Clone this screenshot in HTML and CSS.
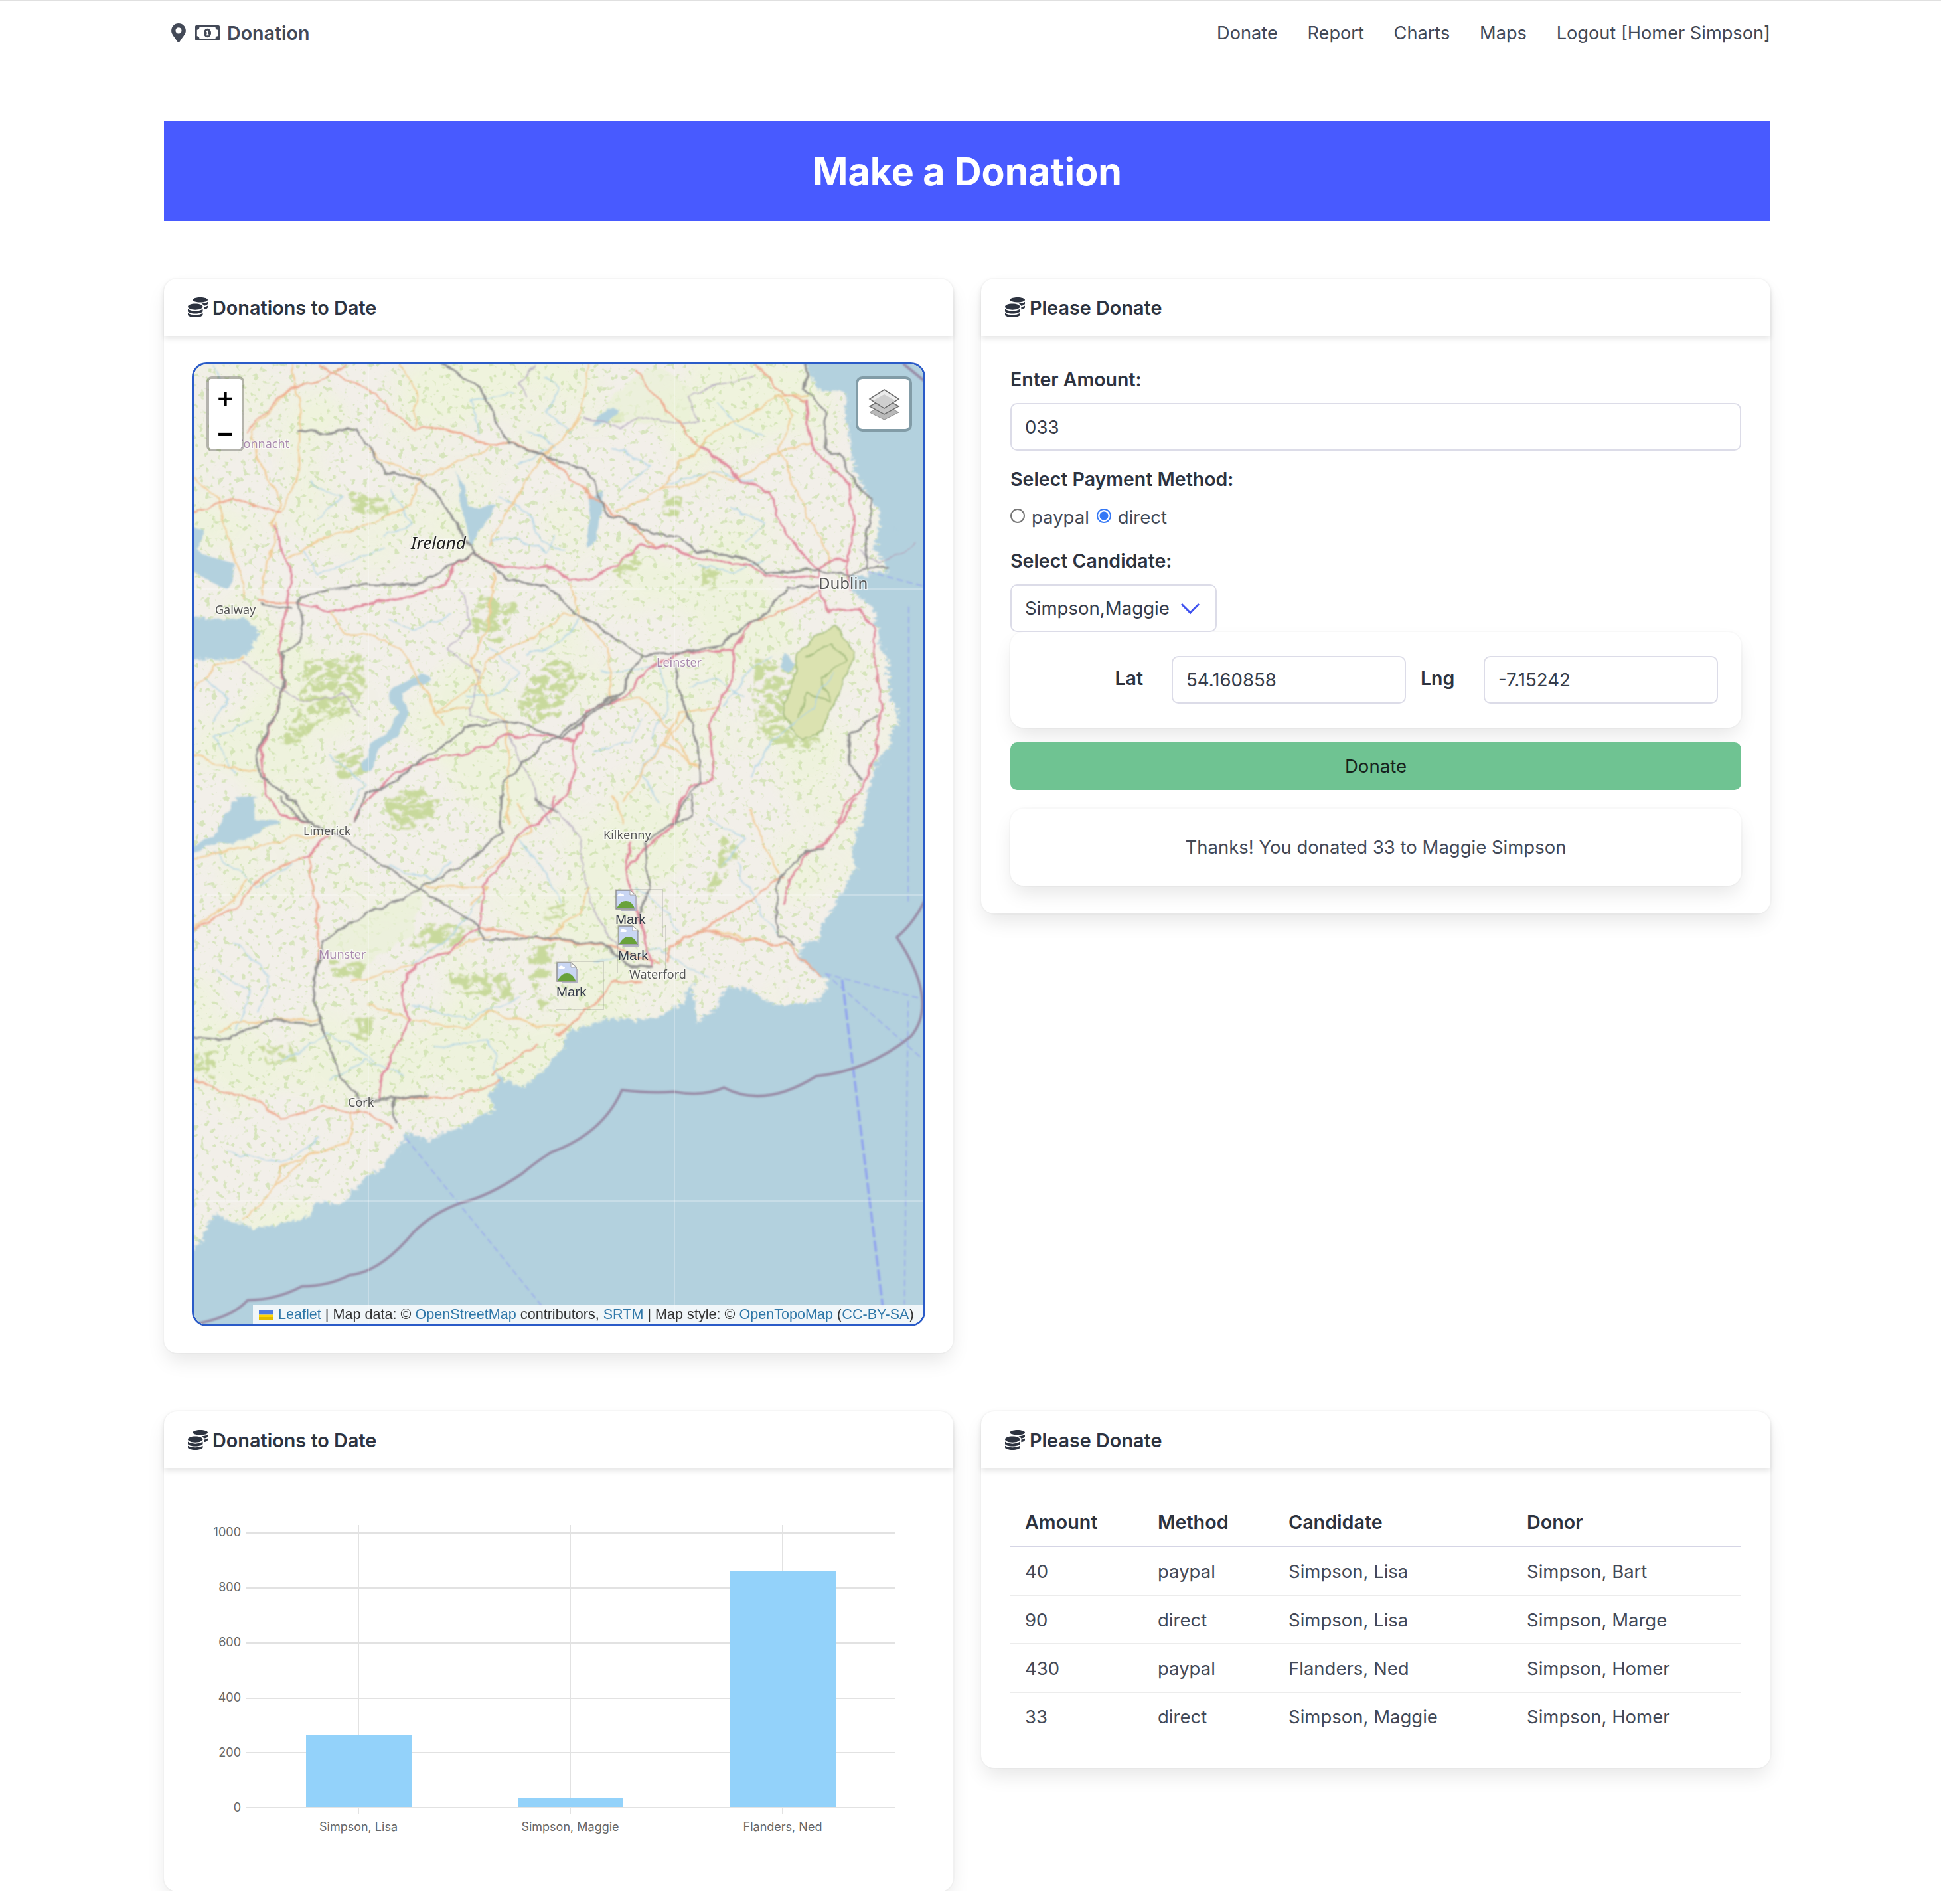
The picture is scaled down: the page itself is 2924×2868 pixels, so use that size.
FILE: index.html
```html
<!DOCTYPE html>
<html lang="en">
<head>
<meta charset="UTF-8">
<meta name="viewport" content="width=device-width, initial-scale=1.0">
<title>Donation</title>
<link rel="stylesheet" href="styles.css">
</head>
<body>

<svg class="sprites" width="0" height="0">
  <symbol id="coins" viewBox="0 0 512 512"><path d="M0 405.3V448c0 35.3 86 64 192 64s192-28.7 192-64v-42.7C342.7 434.4 267.2 448 192 448S41.3 434.4 0 405.3zM320 128c106 0 192-28.7 192-64S426 0 320 0 128 28.7 128 64s86 64 192 64zM0 300.4V352c0 35.3 86 64 192 64s192-28.7 192-64v-51.6c-41.3 34-116.9 51.6-192 51.6S41.3 334.4 0 300.4zm416 11c57.3-11.1 96-31.7 96-55.4v-42.7c-23.2 16.4-57.3 27.6-96 34.5v63.6zM192 160C86 160 0 195.8 0 240s86 80 192 80 192-35.8 192-80-86-80-192-80zm219.3 56.3c60-10.8 100.7-32 100.7-56.3v-42.7c-35.5 25.1-96.5 38.6-160.7 41.8 29.5 14.3 51.2 33.5 60 57.2z"/></symbol>
  <symbol id="broken" viewBox="0 0 32 32">
    <path d="M1 1H22L30 8V29H1Z" fill="#c9d6f3" stroke="#8a8a8a" stroke-width="1.4"/>
    <path d="M22 1V8H30Z" fill="#fff" stroke="#a5a5a5" stroke-width="1"/>
    <path d="M4 8c1-3 5-3 6-1 3-1 4 2 2 3H5c-2 0-2-2-1-2z" fill="#fff"/>
    <path d="M2 28C6 20 11 17 16 17s10 3 13 11z" fill="#69a23a"/>
    <path d="M31 10V31H8" fill="none" stroke="#b4b4c4" stroke-width="2"/>
  </symbol>
</svg>

<div class="container">

  <nav class="navbar">
    <div class="brand">
      <svg class="icon-pin" viewBox="0 0 384 512"><path d="M172.268 501.67C26.97 291.031 0 268.413 0 192 0 85.961 85.961 0 192 0s192 85.961 192 192c0 76.413-26.97 99.031-172.268 309.67-9.535 13.774-29.93 13.773-39.464 0zM192 272c44.183 0 80-35.817 80-80s-35.817-80-80-80-80 35.817-80 80 35.817 80 80 80z"/></svg>
      <svg class="icon-bill" viewBox="0 64 640 384" preserveAspectRatio="none"><path d="M320 144c-53.02 0-96 50.14-96 112 0 61.85 42.98 112 96 112 53 0 96-50.13 96-112 0-61.86-42.98-112-96-112zm40 168c0 4.42-3.58 8-8 8h-64c-4.42 0-8-3.58-8-8v-16c0-4.42 3.58-8 8-8h16v-55.44l-.47.31a7.992 7.992 0 0 1-11.09-2.22l-8.88-13.31a7.992 7.992 0 0 1 2.22-11.09l15.33-10.22a23.99 23.99 0 0 1 13.31-4.03H328c4.42 0 8 3.58 8 8v88h16c4.42 0 8 3.58 8 8v16zM608 64H32C14.33 64 0 78.33 0 96v320c0 17.67 14.33 32 32 32h576c17.67 0 32-14.33 32-32V96c0-17.67-14.33-32-32-32zm-16 272c-35.35 0-64 28.65-64 64H112c0-35.35-28.65-64-64-64V176c35.35 0 64-28.65 64-64h416c0 35.35 28.65 64 64 64v160z"/></svg>
      <span>Donation</span>
    </div>
    <div class="nav-links">
      <a>Donate</a>
      <a>Report</a>
      <a>Charts</a>
      <a>Maps</a>
      <a>Logout [Homer Simpson]</a>
    </div>
  </nav>

  <section class="hero">
    <h1>Make a Donation</h1>
  </section>

  <div class="columns first-row">
    <div class="card">
      <header class="card-header">
        <svg class="icon-coins"><use href="#coins"/></svg>
        <span>Donations to Date</span>
      </header>
      <div class="card-body map-body">
        <div class="map">
          <svg class="map-art" width="1099" height="1446" viewBox="292 549 1099 1446">
            <defs>
              <filter id="speckle" x="0" y="0" width="100%" height="100%" color-interpolation-filters="sRGB">
                <feTurbulence type="fractalNoise" baseFrequency="0.11" numOctaves="2" seed="7"/>
                <feColorMatrix values="0 0 0 0 .78  0 0 0 0 .87  0 0 0 0 .64  9 0 0 0 -5.4"/>
              </filter>
              <filter id="wash" x="0" y="0" width="100%" height="100%" color-interpolation-filters="sRGB">
                <feTurbulence type="fractalNoise" baseFrequency="0.006" numOctaves="2" seed="3"/>
                <feColorMatrix values="0 0 0 0 .93  0 0 0 0 .96  0 0 0 0 .84  5 0 0 0 -2.2"/>
              </filter>
              <filter id="patchy" x="0" y="0" width="100%" height="100%" color-interpolation-filters="sRGB">
                <feTurbulence type="fractalNoise" baseFrequency="0.05" numOctaves="3" seed="11" result="noise"/>
                <feColorMatrix in="noise" values="0 0 0 0 0  0 0 0 0 0  0 0 0 0 0  8 0 0 0 -3.4" result="holes"/>
                <feComposite in="SourceGraphic" in2="holes" operator="in"/>
                <feGaussianBlur stdDeviation="1"/>
              </filter>
              <filter id="organic" x="0" y="0" width="100%" height="100%" color-interpolation-filters="sRGB">
                <feTurbulence type="fractalNoise" baseFrequency="0.035" numOctaves="3" seed="5" result="noise"/>
                <feDisplacementMap in="SourceGraphic" in2="noise" scale="14" xChannelSelector="R" yChannelSelector="G"/>
                <feGaussianBlur stdDeviation="0.8"/>
              </filter>
              <filter id="coast" x="0" y="0" width="100%" height="100%" color-interpolation-filters="sRGB">
                <feTurbulence type="fractalNoise" baseFrequency="0.1" numOctaves="3" seed="9" result="noise"/>
                <feDisplacementMap in="SourceGraphic" in2="noise" scale="26" xChannelSelector="R" yChannelSelector="G"/>
              </filter>
              <filter id="soft"><feGaussianBlur stdDeviation="0.8"/></filter>
              <filter id="softer"><feGaussianBlur stdDeviation="0.35"/></filter>
            </defs>

            <rect class="land" x="292" y="549" width="1099" height="1446"/>
            <rect x="292" y="549" width="1099" height="1446" filter="url(#wash)" opacity="0.6"/>
            <rect x="292" y="549" width="1099" height="1446" filter="url(#speckle)" opacity="0.62"/>

            <g filter="url(#organic)">
              <!-- upper part of the map, drawn in the 1120x700 crop units -->
              <g transform="translate(280 540) scale(.714 .446)">
                <g filter="url(#patchy)">
                  <path class="wood" d="M720 1090L780 1010 850 1060 800 1150 790 1210 730 1230 700 1180Z"/>
                  <path class="wood" d="M250 1020L370 1000 380 1100 350 1200 280 1230 250 1290 200 1300 240 1180Z"/>
                  <path class="wood" d="M310 1340L370 1310 385 1400 320 1425Z"/>
                  <path class="wood" d="M420 1480L500 1450 525 1530 440 1568Z"/>
                  <path class="wood" d="M935 640L960 690 930 760 900 720Z"/>
                  <path class="wood" d="M1010 460L1045 470 1040 550 1005 530Z"/>
                  <path class="wood" d="M880 180L920 160 930 210 880 220Z"/>
                  <path class="wood" d="M1200 1000L1300 1040 1340 1320 1260 1320 1200 1260Z"/>
                  <path class="wood" d="M1090 700L1130 720 1120 780 1085 770Z"/>
                  <path class="wood" d="M620 800L700 830 660 960 600 920Z"/>
                  <path class="wood" d="M340 450L420 470 430 530 350 520Z"/>
                </g>
                <path class="wood-light" d="M940 70L1000 30 1070 110 1060 220 950 220 870 190Z"/>
                <path class="wood-dark" d="M1290 1000L1340 930 1370 900 1410 1000 1385 1100 1345 1250 1300 1290 1260 1190 1280 1100Z"/>
                <path class="wood-line" d="M1310 1010L1360 960 1390 1020 1340 1080 1360 1160 1310 1130 1290 1210"/>

                <g filter="url(#coast)">
                  <path class="sea" d="M1310 20L1315 60 1340 100 1390 120 1395 200 1400 300 1420 420 1450 480 1468 510 1450 640 1480 720 1400 740 1400 780 1450 840 1455 900 1480 1020 1485 1130 1502 1220 1482 1300 1460 1360 1435 1480 1425 1568 1600 1568 1600 -20 1310 -20Z"/>
                  <path class="sea" d="M-20 880L130 875 152 930 130 1000 70 1020 40 1020 -20 1000Z"/>
                </g>
                <path class="sea" d="M0 560L40 580 20 640 60 680 100 680 90 780 60 760 0 700Z"/>
                <path class="sea" d="M570 380L600 500 655 500 625 560 600 640 590 560Z"/>
                <path class="sea" d="M855 470L880 440 870 620 845 640Z"/>
                <path class="sea" d="M885 170L915 170 890 220 860 225Z"/>
                <path class="sea" d="M1490 570L1505 580 1495 590Z"/>
                <path class="sea" d="M1265 1000L1285 1030 1270 1060 1250 1050Z"/>
                <path class="lake-line" d="M500 1080L440 1130 460 1200 440 1260 400 1310 380 1380"/>
                <path class="sea" d="M100 1500L140 1480 150 1560 90 1568Z"/>

                <g class="river">
                  <path d="M60 30L90 120 60 210 110 260"/>
                  <path d="M690 120L600 140 620 250"/>
                  <path d="M760 60L790 110 760 180 810 250"/>
                  <path d="M1040 350L1010 420 1130 380 1200 420"/>
                  <path d="M640 620L700 610 760 660 780 600"/>
                  <path d="M660 470L720 520 750 630 800 640"/>
                  <path d="M250 650L280 730 340 690 420 640"/>
                  <path d="M1080 700L1160 720 1220 680"/>
                  <path d="M880 1060L1000 1040 1020 1180 980 1280"/>
                  <path d="M640 980L700 1060 660 1130 590 1140"/>
                  <path d="M1130 1180L1200 1040 1240 1000"/>
                  <path d="M1000 1300L960 1400 1000 1500"/>
                  <path d="M140 1220L60 1280 100 1400"/>
                  <path d="M1370 1060L1320 1180 1240 1290 1190 1410"/>
                  <path d="M830 880L790 960 720 1000"/>
                  <path d="M40 1080L90 1150 60 1220"/>
                  <path d="M260 420L330 470 280 540"/>
                  <path d="M430 440L480 560 420 600"/>
                  <path d="M720 240L780 300 700 360"/>
                  <path d="M900 300L980 360 920 440"/>
                  <path d="M1120 150L1160 230 1220 260"/>
                  <path d="M1150 500L1220 560 1180 620"/>
                  <path d="M560 860L480 920 430 880"/>
                  <path d="M300 1340L380 1440 340 1520"/>
                  <path d="M860 1330L940 1290 960 1220"/>
                  <path d="M1180 1140L1120 1080 1060 1110"/>
                </g>
                <g class="border">
                  <path d="M1060 130L1100 95 1180 70 1200 60"/>
                  <path d="M1060 130L1080 210 1040 220 960 200 920 230 840 200"/>
                  <path d="M740 30L700 90 720 130"/>
                  <path d="M1420 650L1460 690 1540 630"/>
                  <path d="M580 780L600 900 550 980 620 1060 600 1200 670 1230 740 1470 770 1568"/>
                  <path d="M120 1020L190 1110 250 1160 330 1130 370 1210"/>
                </g>
                <g class="road-sec">
                  <path d="M220 100L180 170 140 250 150 340 200 480 190 540 180 570"/>
                  <path d="M225 20L225 90 240 140 240 400 200 520"/>
                  <path d="M380 310L420 350 500 400 580 350 650 290"/>
                  <path d="M450 20L490 130 480 235"/>
                  <path d="M760 330L830 190 850 20"/>
                  <path d="M830 200L720 400 640 630"/>
                  <path d="M500 400L470 500 370 570 300 600 210 680"/>
                  <path d="M1090 300L1040 350 1000 440 960 480 905 515"/>
                  <path d="M1250 125L1310 125"/>
                  <path d="M1250 125L1180 200 1100 260 1090 300"/>
                  <path d="M1000 430L1060 430 1100 390 1160 405 1260 310 1320 290"/>
                  <path d="M1250 310L1320 550 1360 680"/>
                  <path d="M1250 125L1280 190 1250 310"/>
                  <path d="M820 870L800 870 720 950 640 1010 620 1090 530 1190 600 1180"/>
                  <path d="M310 860L330 930 380 930 460 990 490 1090 530 1190 540 1240"/>
                  <path d="M810 760L830 870 890 980 900 1160"/>
                  <path d="M900 1145L980 1160 1030 1290 1085 1400"/>
                  <path d="M1120 1180L1040 1200 1010 1290 920 1500"/>
                  <path d="M650 720L640 900 600 1020 640 1180 680 1240 680 1568"/>
                  <path d="M20 400L70 480 90 620 120 760 120 820"/>
                  <path d="M15 1120L60 1040 120 1010"/>
                  <path d="M190 560L170 700 160 800"/>
                  <path d="M1060 1200L1010 1300 1080 1380"/>
                  <path d="M15 1340L90 1380 150 1390"/>
                </g>
                <g class="road-trunk">
                  <path d="M280 20L350 80 400 120 430 170 480 235 540 235 640 290 690 290"/>
                  <path d="M690 290L760 330 830 430 900 520 990 630"/>
                  <path d="M950 50L1000 140 1050 240 1090 300"/>
                  <path d="M1200 20L1260 120 1310 140"/>
                  <path d="M1200 885L1280 840 1335 790"/>
                  <path d="M150 820L235 825"/>
                  <path d="M340 20L280 80 220 100 190 140 130 250"/>
                  <path d="M15 520L100 470 200 520"/>
                </g>
                <g class="road-main">
                  <path d="M610 655L640 690 710 710 760 700 810 745 860 740 900 700 960 630 1020 635 1090 680 1150 680 1230 730 1335 745 1335 715 1360 680 1395 680"/>
                  <path d="M1090 300L1150 370 1170 410 1230 450 1250 540 1290 640 1335 715"/>
                  <path d="M1310 140L1320 300 1400 430 1410 560 1395 700 1400 780"/>
                  <path d="M610 655L565 700 550 760 490 795 420 820 305 858 235 825"/>
                  <path d="M185 570L200 640 225 740 205 900 195 1000 210 1090 180 1230 160 1320 170 1480 200 1540 260 1568"/>
                  <path d="M1335 770L1360 850 1420 850 1450 900 1465 1200 1455 1350 1425 1450 1390 1510 1380 1568"/>
                  <path d="M1200 885L1155 985 1040 995 980 1050 930 1130 900 1160 850 1190 820 1290 760 1270 680 1275 620 1320 480 1370 440 1400 360 1530 355 1568"/>
                  <path d="M1155 985L1160 1060 1120 1180 1105 1270 1115 1420 1060 1450 1030 1568"/>
                  <path d="M820 1290L820 1400 800 1480 740 1568"/>
                </g>
                <g class="road-motor">
                  <path d="M540 20L620 100 665 240 680 290 760 330 845 375 885 520 960 578 1040 605 1080 650 1160 660 1230 720 1300 715 1335 715 1400 740 1430 705 1480 705"/>
                  <path d="M235 245L290 255 360 240 385 310 420 380 495 410 540 470 580 590 610 655 680 745 760 770 820 860 880 915 960 1000 1040 995 1130 970 1205 880 1270 775 1335 770"/>
                  <path d="M610 655L480 770 380 760 255 795 235 825 245 900 240 960 200 1000 210 1080 190 1190 150 1340 160 1410 230 1500 260 1568"/>
                  <path d="M960 1000L920 1120 840 1210 760 1300 670 1430 665 1568"/>
                  <path d="M1035 1030L1040 1120 1080 1300 1085 1430 1060 1480 1030 1568"/>
                  <path d="M910 1140L790 1280 700 1230 590 1245 550 1300 480 1370 440 1430 380 1470 355 1568"/>
                  <path d="M1310 20L1305 100 1350 180 1350 310 1380 330 1410 420 1450 480 1440 560 1435 700"/>
                  <path d="M1460 1200L1400 1270 1400 1380 1425 1420"/>
                  <path d="M160 830L220 845"/>
                </g>
              </g>

              <!-- lower part of the map, drawn in the 1120x820 crop units -->
              <g transform="translate(280 1200) scale(.714 .523)">
                <g filter="url(#patchy)">
                  <path class="wood" d="M505 365L610 370 590 420 520 445 470 430Z"/>
                  <path class="wood" d="M550 510L680 505 690 590 600 570 560 550Z"/>
                  <path class="wood" d="M720 440L780 420 770 500 740 570 790 610 750 620 720 490Z"/>
                  <path class="wood" d="M1130 110L1170 150 1140 230 1110 280 1100 270 1120 190Z"/>
                  <path class="wood" d="M15 735L70 735 60 810 15 790Z"/>
                  <path class="wood" d="M300 470L380 480 370 520 310 520Z"/>
                  <path class="wood" d="M760 320L800 300 795 360 755 360Z"/>
                  <path class="wood" d="M340 640L400 640 380 700 345 690Z"/>
                  <path class="wood" d="M150 720L220 710 230 760 170 770Z"/>
                  <path class="wood" d="M420 20L540 10 500 100 430 90Z"/>
                </g>
                <path class="wood-light" d="M300 390L500 270 480 400 380 480 290 440Z"/>

                <g filter="url(#coast)">
                  <path class="sea" d="M1440 -20L1420 80 1405 150 1415 200 1380 290 1350 350 1335 415 1300 420 1298 470 1340 520 1358 525 1340 590 1240 600 1190 555 1150 545 1125 590 1085 650 1075 590 1065 530 1052 590 1000 640 880 640 800 680 795 730 715 835 660 810 640 860 650 900 580 950 510 990 470 960 465 990 445 1020 380 1100 340 1165 275 1170 265 1210 150 1245 60 1210 20 1300 -20 1300 -20 1580 1600 1580 1600 -20Z"/>
                </g>
                <path class="sea" d="M0 165L70 130 100 140 200 70 130 65 110 0 150 0 80 50 60 110 0 150Z"/>

                <g class="river">
                  <path d="M60 160L150 260 220 200"/>
                  <path d="M100 420L180 520 150 620"/>
                  <path d="M700 120L760 220 790 300"/>
                  <path d="M620 290L560 400 480 480"/>
                  <path d="M480 600L600 640 700 580"/>
                  <path d="M1040 390L1000 310 950 260"/>
                  <path d="M860 480L1000 440 1100 520"/>
                  <path d="M200 760L300 680 400 760"/>
                  <path d="M90 1020L200 1060 280 980"/>
                  <path d="M520 720L640 700 660 810"/>
                  <path d="M1160 190L1200 300 1250 400"/>
                  <path d="M1100 60L1180 120 1130 200"/>
                  <path d="M430 200L520 240 560 190"/>
                  <path d="M60 500L140 560 100 680"/>
                  <path d="M300 820L380 760 460 800"/>
                </g>
                <g class="border">
                  <path d="M770 20L830 120 840 240 870 350 920 460"/>
                </g>
                <g class="road-sec">
                  <path d="M20 175L120 150 220 120 300 110"/>
                  <path d="M510 260L640 260 600 310"/>
                  <path d="M850 260L830 340 770 400"/>
                  <path d="M1020 430L1100 380 1260 430"/>
                  <path d="M380 600L470 640 590 670 640 620 740 660 800 660"/>
                  <path d="M280 640L100 650 70 680"/>
                  <path d="M350 530L470 490 640 400"/>
                  <path d="M280 1020L200 1070 190 1130"/>
                  <path d="M350 900L340 1000 270 1020 120 1220"/>
                  <path d="M700 20L730 100 620 230"/>
                  <path d="M1190 40L1250 220"/>
                  <path d="M900 0L920 70"/>
                  <path d="M15 380L90 310 130 240"/>
                </g>
                <g class="road-trunk">
                  <path d="M15 385L100 320 160 230 260 170 300 110"/>
                  <path d="M260 170L280 340 280 480"/>
                  <path d="M620 375L740 405 880 425 1000 480"/>
                  <path d="M1020 480L1020 430 1100 380 1150 405 1270 430 1340 520"/>
                  <path d="M1090 380L1170 320 1260 230"/>
                  <path d="M780 690L830 640 900 540 960 530"/>
                  <path d="M660 820L640 835 560 865 440 870"/>
                  <path d="M15 815L100 860 150 870 200 930 290 895 380 910 430 950"/>
                  <path d="M745 710L650 800"/>
                </g>
                <g class="road-main">
                  <path d="M410 870L410 820 470 640 455 540 490 480 550 450 620 375 630 260 650 220 720 90 770 40 780 0"/>
                  <path d="M300 110L250 180"/>
                  <path d="M935 130L930 220 960 350 980 490"/>
                  <path d="M1050 0L1020 90 960 160 930 210"/>
                  <path d="M1410 10L1380 90 1330 140 1270 240 1260 310"/>
                </g>
                <g class="road-motor">
                  <path d="M665 0L665 100 600 180 490 270 380 340 290 410 270 560 285 650 320 800 370 880"/>
                  <path d="M200 0L235 60 330 115 410 190 490 260 530 300 620 370 630 415 740 400 880 420 920 480 980 490"/>
                  <path d="M1070 0L1070 60 1020 80 970 130 975 260 960 340"/>
                  <path d="M1340 140L1260 210 1245 270 1250 400 1280 430"/>
                  <path d="M15 690L90 700 170 645 280 655"/>
                  <path d="M370 880L440 870 510 860"/>
                  <path d="M440 870L440 935"/>
                  <path d="M740 0L780 45"/>
                </g>
              </g>
            </g>

            <!-- sea borders stay smooth -->
            <g filter="url(#soft)">
              <g transform="translate(280 540) scale(.714 .446)">
                <g class="dash">
                  <path d="M1525 840V1568"/>
                  <path d="M1440 720L1560 770"/>
                </g>
                <path class="limit" d="M1515 20L1565 85"/>
              </g>
              <g transform="translate(280 1200) scale(.714 .523)">
                <g class="dash">
                  <path d="M465 985L750 1465"/>
                  <path d="M1350 510L1560 585"/>
                  <path d="M1350 510L1550 750"/>
                  <path d="M1524 0V300"/>
                  <path d="M1524 590L1516 1460"/>
                </g>
                <path class="dash-wide" d="M1385 530L1470 1465"/>
                <path class="limit" d="M10 1522Q100 1500 130 1450 190 1450 245 1410 300 1410 345 1378 410 1370 480 1255 520 1200 580 1170 640 1150 710 1085 740 1050 770 1025 880 970 920 845 980 855 1030 850 1090 865 1135 838 1220 900 1330 805 1440 790 1530 690 1590 590 1500 405 1540 360 1565 280"/>
              </g>
            </g>

            <g class="seams">
              <path d="M555 549V1995"/>
              <path d="M1016 549V1995"/>
              <path d="M292 887H1391"/>
              <path d="M292 1348H1391"/>
              <path d="M292 1809H1391"/>
            </g>

            <g filter="url(#softer)">
              <text class="label-country" x="619" y="827">Ireland</text>
              <text class="label-city big" x="1233" y="887">Dublin</text>
              <text class="label-city" x="324" y="925">Galway</text>
              <text class="label-area" x="989" y="1004">Leinster</text>
              <text class="label-area" x="436" y="675" text-anchor="end">Connacht</text>
              <text class="label-city" x="457" y="1258">Limerick</text>
              <text class="label-city" x="909" y="1264">Kilkenny</text>
              <text class="label-area" x="480" y="1444">Munster</text>
              <text class="label-city" x="948" y="1474">Waterford</text>
              <text class="label-city" x="524" y="1667">Cork</text>
            </g>
          </svg>

          <div class="marker m-one">
            <svg class="marker-img"><use href="#broken"/></svg>
            <span class="marker-alt">Mark</span>
          </div>
          <div class="marker m-two">
            <svg class="marker-img"><use href="#broken"/></svg>
            <span class="marker-alt">Mark</span>
          </div>
          <div class="marker m-three">
            <svg class="marker-img"><use href="#broken"/></svg>
            <span class="marker-alt">Mark</span>
          </div>

          <div class="zoom-control">
            <a>+</a>
            <a>−</a>
          </div>

          <div class="layers-control">
            <svg viewBox="0 0 48 46" width="48" height="46">
              <path d="M24 24L46 35 24 46 2 35Z" fill="#b9b9b9" stroke="#8c8c8c"/>
              <path d="M24 14L46 26 24 38 2 26Z" fill="#c6c6c6" stroke="#6d6d6d" stroke-width="1.5"/>
              <path d="M24 1L46 15 24 29 2 15Z" fill="#ececec" stroke="#6d6d6d" stroke-width="1.5"/>
              <path d="M24 8L40 17 24 28 8 17Z" fill="#cfcfcf"/>
            </svg>
          </div>

          <div class="attribution"><svg class="flag" viewBox="0 0 21 15"><rect width="21" height="7.5" fill="#4c7be1"/><rect y="7.5" width="21" height="3.5" fill="#ffd500"/><rect y="11" width="21" height="4" fill="#e0bc00"/></svg><a>Leaflet</a> | Map data: © <a>OpenStreetMap</a> contributors, <a>SRTM</a> | Map style: © <a>OpenTopoMap</a> (<a>CC-BY-SA</a>)</div>
        </div>
      </div>
    </div>

    <div class="card">
      <header class="card-header">
        <svg class="icon-coins"><use href="#coins"/></svg>
        <span>Please Donate</span>
      </header>
      <div class="card-body form-body">
        <label class="field-label">Enter Amount:</label>
        <input class="input" type="text" value="033">

        <label class="field-label payment-label">Select Payment Method:</label>
        <div class="radios">
          <input type="radio" name="method" id="paypal"><label for="paypal">paypal</label>
          <input type="radio" name="method" id="direct" checked><label for="direct">direct</label>
        </div>

        <label class="field-label candidate-label">Select Candidate:</label>
        <div class="select-wrap">
          <select class="select">
            <option>Simpson,Maggie</option>
            <option>Simpson,Lisa</option>
            <option>Flanders,Ned</option>
          </select>
        </div>

        <div class="box coords">
          <label class="coord-label lat-label">Lat</label>
          <input class="input" type="text" value="54.160858">
          <label class="coord-label">Lng</label>
          <input class="input" type="text" value="-7.15242">
        </div>

        <button class="donate-btn">Donate</button>

        <div class="box thanks">Thanks! You donated 33 to Maggie Simpson</div>
      </div>
    </div>
  </div>

  <div class="columns">
    <div class="card">
      <header class="card-header">
        <svg class="icon-coins"><use href="#coins"/></svg>
        <span>Donations to Date</span>
      </header>
      <div class="chart-body">
        <svg class="chart" width="1189" height="636" viewBox="247 2213 1189 636">
          <g class="grid">
            <path d="M370 2310H1349"/>
            <path d="M370 2393H1349"/>
            <path d="M370 2476H1349"/>
            <path d="M370 2559H1349"/>
            <path d="M370 2641H1349"/>
            <path d="M370 2724H1349"/>
            <path d="M540 2298V2733"/>
            <path d="M859 2298V2733"/>
            <path d="M1179 2298V2733"/>
          </g>
          <rect class="bar" x="461" y="2615" width="159" height="108"/>
          <rect class="bar" x="780" y="2710" width="159" height="13"/>
          <rect class="bar" x="1099" y="2367" width="160" height="356"/>
          <g class="y-ticks">
            <text x="363" y="2315">1000</text>
            <text x="363" y="2398">800</text>
            <text x="363" y="2481">600</text>
            <text x="363" y="2564">400</text>
            <text x="363" y="2647">200</text>
            <text x="363" y="2730">0</text>
          </g>
          <g class="x-ticks">
            <text x="540" y="2759">Simpson, Lisa</text>
            <text x="859" y="2759">Simpson, Maggie</text>
            <text x="1179" y="2759">Flanders, Ned</text>
          </g>
        </svg>
      </div>
    </div>

    <div class="card">
      <header class="card-header">
        <svg class="icon-coins"><use href="#coins"/></svg>
        <span>Please Donate</span>
      </header>
      <div class="card-body table-body">
        <table class="table">
          <thead>
            <tr><th>Amount</th><th>Method</th><th>Candidate</th><th>Donor</th></tr>
          </thead>
          <tbody>
            <tr><td>40</td><td>paypal</td><td>Simpson, Lisa</td><td>Simpson, Bart</td></tr>
            <tr><td>90</td><td>direct</td><td>Simpson, Lisa</td><td>Simpson, Marge</td></tr>
            <tr><td>430</td><td>paypal</td><td>Flanders, Ned</td><td>Simpson, Homer</td></tr>
            <tr><td>33</td><td>direct</td><td>Simpson, Maggie</td><td>Simpson, Homer</td></tr>
          </tbody>
        </table>
      </div>
    </div>
  </div>

</div>

</body>
</html>
```
FILE: styles.css
```css
* {
  box-sizing: border-box;
}
body {
  margin: 0;
  border-top: 2px solid #e0e0e0;
  background-color: #fff;
  color: #434957;
  font-family: "Inter", "Liberation Sans", sans-serif;
  font-size: 27.5px;
}
.sprites {
  position: absolute;
}
.container {
  width: 2420px;
  margin-left: 247px;
}

/* navbar */
.navbar {
  display: flex;
  justify-content: space-between;
  align-items: center;
  height: 94px;
}
.brand {
  display: flex;
  align-items: center;
  padding-left: 11px;
  font-weight: 600;
  font-size: 28.6px;
}
.icon-pin {
  width: 22px;
  height: 29px;
  fill: #434957;
  margin-right: 14px;
}
.icon-bill {
  width: 37px;
  height: 23px;
  fill: #434957;
  margin-right: 11px;
}
.nav-links {
  display: flex;
  gap: 44.7px;
  font-size: 27.2px;
}

/* banner */
.hero {
  display: flex;
  align-items: center;
  justify-content: center;
  height: 151px;
  margin-top: 86px;
  background-color: #485aff;
}
.hero h1 {
  margin: 0;
  color: #fff;
  font-size: 57.3px;
  font-weight: 700;
}

/* cards */
.columns {
  display: grid;
  grid-template-columns: 1189px 1189px;
  gap: 42px;
  align-items: start;
}
.first-row {
  margin-top: 87px;
  margin-bottom: 88px;
}
.card {
  border-radius: 20px;
  background-color: #fff;
  box-shadow: 0 15px 30px -4px rgba(10, 10, 10, 0.1), 0 0 0 2px rgba(10, 10, 10, 0.02);
}
.card-header {
  display: flex;
  align-items: center;
  gap: 7px;
  height: 86px;
  padding-left: 36px;
  border-radius: 20px 20px 0 0;
  color: #2d3340;
  font-size: 28.8px;
  font-weight: 600;
  box-shadow: 0 4px 8px rgba(10, 10, 10, 0.1);
}
.icon-coins {
  width: 30px;
  height: 30px;
  fill: #2d3340;
}
.map-body {
  padding: 40px 42px;
}
.form-body {
  padding: 49px 44px 42px;
}
.chart-body {
  height: 637px;
}
.chart {
  display: block;
}
.table-body {
  padding: 44px 44px 41px;
}

/* map */
.map {
  position: relative;
  width: 1105px;
  height: 1452px;
  overflow: hidden;
  border: 3px solid #2a5bc8;
  border-radius: 22px;
}
.map-art {
  display: block;
}
.map-art path {
  fill: none;
  stroke-linejoin: round;
  stroke-linecap: round;
  vector-effect: non-scaling-stroke;
}
.land {
  fill: #f2efe9;
}
.map-art .sea {
  fill: #b3d1de;
}
.map-art .wood {
  fill: #c8d99c;
}
.map-art .wood-light {
  fill: #eaf1d6;
  opacity: 0.7;
}
.map-art .wood-dark {
  fill: #dbe2b0;
  stroke: #a5bd80;
  stroke-width: 2;
}
.map-art .wood-line {
  stroke: #a5bd80;
  stroke-width: 2;
}
.map-art .lake-line {
  stroke: #b3d1de;
  stroke-width: 14;
}
.river path {
  stroke: #b4d6e6;
  stroke-width: 1.6;
}
.border path {
  stroke: #b6acc0;
  stroke-width: 1.6;
}
.road-sec path {
  stroke: #f1cb94;
  stroke-width: 2.2;
}
.road-trunk path {
  stroke: #eeaa90;
  stroke-width: 2.6;
}
.road-main path {
  stroke: #e08a9c;
  stroke-width: 3;
}
.road-motor path {
  stroke: #8e8e8e;
  stroke-width: 2.8;
}
.dash path {
  stroke: #9fb2ea;
  stroke-width: 2;
  stroke-dasharray: 8 7;
}
.map-art .dash-wide {
  stroke: #94a9ec;
  stroke-width: 4;
  stroke-dasharray: 14 8;
}
.map-art .limit {
  stroke: #9a8fa9;
  stroke-width: 4;
}
.seams path {
  stroke: #fff;
  stroke-width: 1;
  opacity: 0.55;
}
.map-art text {
  font-family: "Noto Sans", sans-serif;
  paint-order: stroke;
  stroke: rgba(255, 255, 255, 0.6);
  stroke-width: 3px;
}
.label-country {
  font-size: 26px;
  font-style: italic;
  fill: #222;
}
.label-city {
  font-size: 18px;
  fill: #555;
}
.label-city.big {
  font-size: 24px;
}
.label-area {
  font-size: 18px;
  fill: #a98aae;
}

/* things on top of the map */
.marker {
  position: absolute;
  width: 73px;
  height: 73px;
  border: 1px solid rgba(120, 120, 120, 0.25);
  overflow: hidden;
}
.m-one {
  left: 634px;
  top: 790px;
}
.m-two {
  left: 638px;
  top: 844px;
}
.m-three {
  left: 545px;
  top: 899px;
}
.marker-img {
  display: block;
  width: 32px;
  height: 32px;
}
.marker-alt {
  display: block;
  width: 46px;
  overflow: hidden;
  margin-top: -2px;
  color: #363c4a;
  font-size: 20.5px;
  line-height: 30px;
  white-space: nowrap;
  font-family: "Liberation Sans", sans-serif;
}
.zoom-control {
  position: absolute;
  left: 19px;
  top: 18px;
  width: 57px;
  border: 4px solid rgba(0, 0, 0, 0.25);
  border-radius: 8px;
  background-clip: padding-box;
}
.zoom-control a {
  display: flex;
  align-items: center;
  justify-content: center;
  height: 52.5px;
  padding-top: 6px;
  background-color: #fff;
  color: #000;
  font-family: "DejaVu Sans Mono", monospace;
  font-size: 38px;
  font-weight: 700;
}
.zoom-control a:first-child {
  border-bottom: 1px solid #ccc;
  border-radius: 4px 4px 0 0;
}
.zoom-control a:last-child {
  border-radius: 0 0 4px 4px;
}
.layers-control {
  position: absolute;
  left: 997px;
  top: 18px;
  display: flex;
  align-items: center;
  justify-content: center;
  width: 85px;
  height: 83px;
  border: 4px solid rgba(70, 90, 100, 0.45);
  border-radius: 10px;
  background-color: #fff;
  background-clip: padding-box;
}
.attribution {
  position: absolute;
  right: 0;
  bottom: 0;
  width: 1010px;
  height: 30px;
  padding-left: 9px;
  background-color: rgba(255, 255, 255, 0.8);
  color: #333;
  font-family: "Liberation Sans", sans-serif;
  font-size: 21.6px;
  line-height: 30px;
  white-space: nowrap;
}
.attribution a {
  color: #2f77a8;
}
.flag {
  width: 21px;
  height: 15px;
  margin-right: 8px;
  vertical-align: -1px;
}

/* form */
.field-label {
  display: block;
  height: 34px;
  line-height: 34px;
  color: #2d3340;
  font-size: 28.5px;
  font-weight: 600;
}
.input {
  display: block;
  height: 72px;
  padding: 0 20px;
  border: 2px solid #dcdce8;
  border-radius: 10px;
  background-color: #fff;
  color: #363c4a;
  font-family: inherit;
  font-size: 27.6px;
}
.form-body > .input {
  width: 100%;
  margin-top: 18px;
}
.payment-label {
  margin-top: 26px;
}
.radios {
  display: flex;
  align-items: center;
  height: 36px;
  margin-top: 22px;
}
.radios input {
  appearance: none;
  flex: none;
  width: 22px;
  height: 22px;
  margin: -4px 10px 0 0;
  border: 2px solid #767676;
  border-radius: 50%;
  background-color: #fff;
}
.radios input:checked {
  border-color: #3478f6;
  background: radial-gradient(circle, #3478f6 0 6px, #fff 7px);
}
.radios label {
  margin-right: 11px;
}
.candidate-label {
  margin-top: 31px;
}
.select-wrap {
  position: relative;
  width: 311px;
  margin-top: 18px;
}
.select-wrap::after {
  content: "";
  position: absolute;
  top: 21px;
  right: 30px;
  width: 17px;
  height: 17px;
  border-left: 3px solid #3f52f0;
  border-bottom: 3px solid #3f52f0;
  transform: rotate(-45deg);
  pointer-events: none;
}
.select {
  display: block;
  width: 100%;
  height: 72px;
  padding: 0 20px;
  border: 2px solid #dcdce8;
  border-radius: 10px;
  appearance: none;
  background-color: #fff;
  color: #363c4a;
  font-family: inherit;
  font-size: 27.6px;
}
.box {
  border-radius: 20px;
  background-color: #fff;
  box-shadow: 0 15px 30px -4px rgba(10, 10, 10, 0.1), 0 0 0 2px rgba(10, 10, 10, 0.02);
}
.coords {
  display: flex;
  align-items: center;
  height: 144px;
}
.coords .input {
  width: 353px;
}
.coord-label {
  margin: -6px 43px 0 22px;
  width: 52px;
  color: #2d3340;
  font-size: 28.5px;
  font-weight: 600;
}
.lat-label {
  width: 200px;
  margin-left: 0;
  text-align: right;
}
.donate-btn {
  display: block;
  width: 100%;
  height: 72px;
  margin-top: 22px;
  border: 0;
  border-radius: 10px;
  background-color: #6fc392;
  color: #17221c;
  font-family: inherit;
  font-size: 27.6px;
}
.thanks {
  display: flex;
  align-items: center;
  justify-content: center;
  height: 116px;
  margin-top: 28px;
}

/* chart */
.grid path {
  stroke: #e2e2e2;
  stroke-width: 2;
}
.bar {
  fill: #93d2fa;
}
.chart text {
  font-size: 18px;
  fill: #666;
}
.y-ticks text {
  text-anchor: end;
}
.x-ticks text {
  text-anchor: middle;
}

/* table */
.table {
  width: 100%;
  table-layout: fixed;
  border-collapse: collapse;
}
.table th,
.table td {
  height: 73px;
  padding: 0 22px;
  text-align: left;
  border-bottom: 2px solid #ececec;
}
.table th {
  height: 74px;
  color: #2d3340;
  font-size: 28.7px;
  font-weight: 600;
  border-bottom-color: #d5d5e5;
}
.table tr:last-child td {
  border-bottom: 0;
}
.table th:nth-child(1) {
  width: 200px;
}
.table th:nth-child(2) {
  width: 197px;
}
.table th:nth-child(3) {
  width: 359px;
}
```
